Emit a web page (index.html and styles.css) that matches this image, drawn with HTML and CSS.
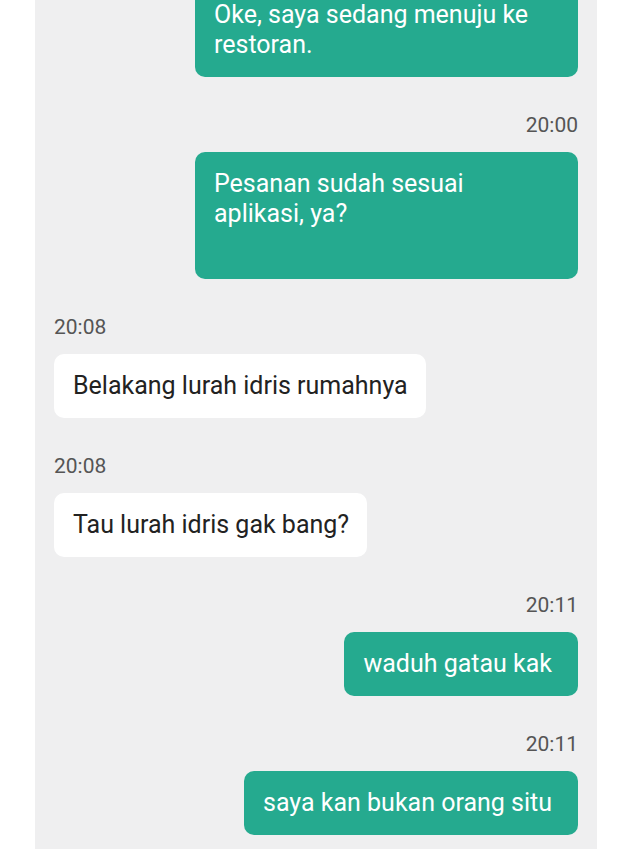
FILE: index.html
```html
<!DOCTYPE html>
<html lang="id">
<head>
<meta charset="utf-8">
<title>Chat</title>
<link rel="stylesheet" href="styles.css">
</head>
<body>
<div class="chat">
  <div class="msg out first">
    <div class="bubble green wide">Oke, saya sedang menuju ke<br>restoran.</div>
  </div>
  <div class="msg out">
    <div class="time">20:00</div>
    <div class="bubble green wide tall">Pesanan sudah sesuai<br>aplikasi, ya?</div>
  </div>
  <div class="msg in">
    <div class="time">20:08</div>
    <div class="bubble white">Belakang lurah idris rumahnya</div>
  </div>
  <div class="msg in">
    <div class="time">20:08</div>
    <div class="bubble white">Tau lurah idris gak bang?</div>
  </div>
  <div class="msg out">
    <div class="time">20:11</div>
    <div class="bubble green">waduh gatau kak</div>
  </div>
  <div class="msg out">
    <div class="time">20:11</div>
    <div class="bubble green">saya kan bukan orang situ</div>
  </div>
</div>
</body>
</html>
```

FILE: styles.css
```css
html, body {
  margin: 0;
  padding: 0;
  background: #ffffff;
}
body {
  font-family: Roboto, "Noto Sans", sans-serif;
  height: 853px;
  overflow: hidden;
}
.chat {
  width: 562px;
  margin-left: 35px;
  height: 849px;
  background: #efeff0;
  padding: 0 19px;
  box-sizing: border-box;
  display: flex;
  flex-direction: column;
  overflow: hidden;
}
.msg {
  display: flex;
  flex-direction: column;
  margin-top: 36px;
}
.msg.first {
  margin-top: -17px;
}
.msg.out { align-items: flex-end; }
.msg.in { align-items: flex-start; }
.time {
  font-size: 21px;
  line-height: 24px;
  color: #555555;
  margin-bottom: 15px;
}
.bubble {
  font-size: 25px;
  line-height: 30px;
  padding: 17px 26px 17px 19px;
  border-radius: 10px;
  box-sizing: border-box;
}
.green {
  background: #25aa8f;
  color: #ffffff;
}
.wide { width: 383px; }
.tall { padding-bottom: 50px; }
.white {
  background: #ffffff;
  color: #222222;
  padding-right: 18px;
}
```
